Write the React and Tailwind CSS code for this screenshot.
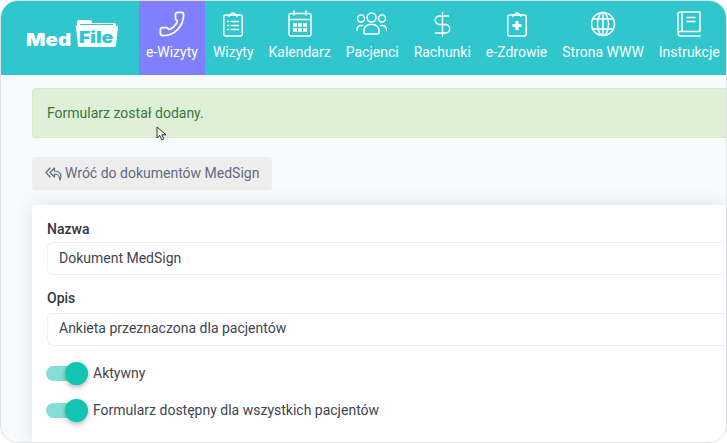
import React from 'react';
import { Phone, DollarSign } from 'lucide-react';

function ClipboardIcon({ plus }) {
    return (
        <svg width="28" height="28" viewBox="0 0 28 28" fill="none" stroke="currentColor" strokeWidth="1.5" strokeLinecap="round" strokeLinejoin="round">
            <rect x="4.750" y="5" width="18.500" height="21" rx="2" />
            <path d="M10 6.500V5h2a2 2 0 0 1 4 0h2v1.500" />
            {plus ? (
                <path d="M14 11v9M9.500 15.500h9" strokeWidth="3.200" strokeLinecap="butt" />
            ) : (
                <path d="M8.500 11.500h1M12 11.500h7.500M8.500 15.500h1M12 15.500h7.500M8.500 19.500h1M12 19.500h7.500" />
            )}
        </svg>
    );
}

function CalendarIcon() {
    return (
        <svg width="28" height="28" viewBox="0 0 28 28" fill="none" stroke="currentColor" strokeWidth="1.5" strokeLinecap="round">
            <rect x="3" y="3.500" width="22" height="22.500" rx="2" />
            <path d="M3 9.500h22M8 1v4M20 1v4" />
            <path d="M7 15h14M7 20h14" strokeWidth="3.600" strokeDasharray="4 1" strokeLinecap="butt" />
        </svg>
    );
}

function UsersIcon() {
    return (
        <svg width="32" height="24" viewBox="0 0 32 24" fill="none" stroke="currentColor" strokeWidth="1.5" strokeLinecap="round" strokeLinejoin="round">
            <circle cx="5" cy="6.500" r="3.500" />
            <circle cx="15.500" cy="5.500" r="4.500" />
            <circle cx="26" cy="6.500" r="3.500" />
            <path d="M8 21v-2.500a6 6 0 0 1 6-6h3a6 6 0 0 1 6 6V21a1 1 0 0 1-1 1H9a1 1 0 0 1-1-1z" />
            <path d="M1 18.500c0-3 1.500-5 4-5h2M30.500 18.500c0-3-1.500-5-4-5h-2" />
        </svg>
    );
}

function GlobeIcon() {
    return (
        <svg width="28" height="28" viewBox="0 0 28 28" fill="none" stroke="currentColor" strokeWidth="1.5">
            <circle cx="14" cy="14" r="11.500" />
            <ellipse cx="14" cy="14" rx="5.500" ry="11.500" />
            <path d="M14 2.500v23M4 9h20M4 19h20" />
        </svg>
    );
}

function BookIcon() {
    return (
        <svg width="28" height="28" viewBox="0 0 28 28" fill="none" stroke="currentColor" strokeWidth="1.5" strokeLinecap="round" strokeLinejoin="round">
            <path d="M3 23V4a2 2 0 0 1 2-2h20v19.500H5.500a2.250 2.250 0 0 0 0 4.500H25" />
            <path d="M7 2v19M12 7.500h8M12 11.500h8" />
        </svg>
    );
}

function BackIcon() {
    return (
        <svg width="18" height="16" viewBox="0 0 18 16" fill="none" stroke="currentColor" strokeWidth="1.200" strokeLinejoin="round" strokeLinecap="round">
            <path d="M5 2 1 6.500 5 11" />
            <path d="M9.500 2 5 6.500 9.500 11V8c3 0 5 2 5.500 6 2-5 .5-9-5.500-9z" />
        </svg>
    );
}

function Logo() {
    return (
        <div className="flex items-end pl-[25px] pb-[27px] text-white font-['Inter',sans-serif] font-black">
            <span className="inline-block w-[49px] origin-left scale-x-120 text-[17px] leading-[16px]">Med</span>
            <div className="relative w-[44px] h-[29px]">
                <svg className="block" width="44" height="29" viewBox="0 0 44 29">
                    <path d="M2 6V3a2 2 0 0 1 2-2h11a2 2 0 0 1 2 2v1h22a2 2 0 0 1 2 2v1h1a1 1 0 0 1 1 1l-2 19a2 2 0 0 1-2 1H5a2 2 0 0 1-2-1L1 9a2 2 0 0 1 1-3z" fill="#ffffff" />
                    <path d="M5 5.500h33" stroke="#2fc6ce" strokeWidth="1" />
                </svg>
                <span className="absolute left-[4px] top-[9px] origin-left scale-x-120 text-[16px] leading-[18px] text-[#2fc6ce]">File</span>
            </div>
        </div>
    );
}

const navItems = [
    { label: 'e-Wizyty', icon: <Phone size={28} strokeWidth={1.5} className="-scale-x-100" />, active: true },
    { label: 'Wizyty', icon: <ClipboardIcon /> },
    { label: 'Kalendarz', icon: <CalendarIcon /> },
    { label: 'Pacjenci', icon: <UsersIcon /> },
    { label: 'Rachunki', icon: <DollarSign size={29} strokeWidth={1.2} /> },
    { label: 'e-Zdrowie', icon: <ClipboardIcon plus /> },
    { label: 'Strona WWW', icon: <GlobeIcon /> },
    { label: 'Instrukcje', icon: <BookIcon /> },
];

function Toggle({ label }) {
    return (
        <div className="flex items-center h-[24px]">
            <div className="relative -ml-[1px] w-[42px] h-[15px] rounded-full bg-[#86dfd5]">
                <div className="absolute right-0 -top-[4px] w-[23px] h-[23px] rounded-full bg-[#12c4b2] shadow-[0_2px_5px_rgba(0,0,0,0.3)]" />
            </div>
            <span className="ml-[5px] text-[14px] text-[#3f4450]">{label}</span>
        </div>
    );
}

export default function App() {
    return (
        <div className="w-[727px] h-[443px] bg-white font-['Roboto',sans-serif]">
            <div className="w-full h-full overflow-hidden rounded-[18px] border border-[#dfe1e4] bg-[#f7fbfd] flex flex-col">
                <nav className="flex gap-[1px] h-[74px] shrink-0 bg-[#2fc6ce] text-white">
                    <div className="w-[137px] shrink-0">
                        <div className="h-full flex items-end">
                            <Logo />
                        </div>
                    </div>
                    {navItems.map((item) => (
                        <div key={item.label} className={`px-[7px] flex flex-col items-center whitespace-nowrap ${item.active ? 'bg-[#7f7fff]' : ''}`}>
                            <div className="h-[28px] mt-[9px] flex items-center">{item.icon}</div>
                            <span className="mt-[4px] text-[14px] leading-[20px]">{item.label}</span>
                        </div>
                    ))}
                </nav>
                <main className="flex-1 pl-[31px] pt-[13px] min-h-0">
                    <div className="relative h-[50px] rounded-l-[4px] bg-[#dff0d8] text-[#3c763d] text-[14px] flex items-center pl-[14px] border border-r-0 border-[#d6e9c6]">
                        Formularz został dodany.
                        <svg className="absolute left-[123px] top-[37px]" width="11" height="15" viewBox="0 0 11 15">
                            <path d="M1 1v11l2.800-2.500 2 4.500 2-1-2-4.200H10z" fill="#ffffff" stroke="#333333" strokeWidth="1" strokeLinejoin="round" />
                        </svg>
                    </div>
                    <button className="mt-[19px] h-[33px] w-[240px] flex items-center gap-[2px] pl-[13px] rounded-[4px] bg-[#eeeeee] text-[#5f6a85] text-[14px]">
                        <BackIcon />
                        Wróć do dokumentów MedSign
                    </button>
                    <div className="mt-[15px] h-[240px] bg-white rounded-tl-[4px] pl-[15px] pt-[15px] shadow-[0_0_20px_rgba(0,0,0,0.1)]">
                        <label className="block text-[14px] font-medium leading-[18px] text-[#33363d]">Nazwa</label>
                        <div className="mt-[4px] h-[33px] rounded-l-[6px] border border-r-0 border-[#f0f0f0] flex items-center pl-[11px] text-[14px] text-[#3f4450]">Dokument MedSign</div>
                        <label className="block mt-[14px] text-[14px] font-medium leading-[18px] text-[#33363d]">Opis</label>
                        <div className="mt-[6px] h-[33px] rounded-l-[6px] border border-r-0 border-[#f0f0f0] flex items-center pl-[11px] pb-[2px] text-[14px] text-[#3f4450]">Ankieta przeznaczona dla pacjentów</div>
                        <div className="mt-[15px] flex flex-col gap-[13px]">
                            <Toggle label="Aktywny" />
                            <Toggle label="Formularz dostępny dla wszystkich pacjentów" />
                        </div>
                    </div>
                </main>
            </div>
        </div>
    );
}
